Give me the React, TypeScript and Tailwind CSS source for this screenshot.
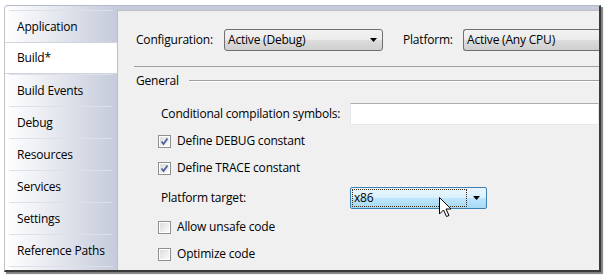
import React from "react";

const font = { fontFamily: '"Open Sans", "Noto Sans", sans-serif' };

const tabs = [
  "Application",
  "Build*",
  "Build Events",
  "Debug",
  "Resources",
  "Services",
  "Settings",
  "Reference Paths",
];

function Arrow() {
  return (
    <svg width="7" height="4" viewBox="0 0 7 4">
      <path d="M0 0H7L3.5 4Z" fill="#000" />
    </svg>
  );
}

function CheckBox({ checked }: { checked: boolean }) {
  return (
    <div className="w-[13px] h-[13px] border border-[#8e8f8f] bg-white p-[1px] shrink-0">
      <div className="w-full h-full bg-[linear-gradient(135deg,#dcdcdc,#fbfbfb)] flex items-center justify-center">
        {checked && (
          <svg width="9" height="9" viewBox="0 0 9 9">
            <path d="M1.5 4.5L3.5 7L7.5 1.5" stroke="#4d61a0" strokeWidth="1.8" fill="none" />
          </svg>
        )}
      </div>
    </div>
  );
}

export default function App() {
  return (
    <div className="w-[604px] h-[276px] bg-white pt-[5px] pl-[4px] text-[12px] tracking-[-0.2px] text-black leading-[16px]" style={font}>
      <div className="w-[597px] h-[267px] flex border-l border-t border-l-[#c3c3c3] border-t-[#b4bacb] border-r-2 border-b-2 border-r-[#3a3a3a] border-b-[#3a3a3a] rounded-tl-[4px] shadow-[2px_2px_1px_rgba(0,0,0,0.5)] bg-[linear-gradient(to_right,#ffffff_0px,#c5cbdb_112px)] pt-[4px] overflow-hidden">
        <div className="w-[112px] shrink-0 flex flex-col">
          {tabs.map((t, i) => {
            const sel = i === 1;
            return (
              <div key={t} className="relative h-[32px] shrink-0">
                {sel ? (
                  <div className="h-full bg-white border-t border-b border-[#d0d4de] flex items-center pl-[12px]">
                    <span className="absolute left-[-2px] top-0 bottom-0 w-[2px] bg-[#3d8ee3]" />
                    {t}
                  </div>
                ) : (
                  <div className="h-full flex flex-col">
                    <div className="mx-[4px] h-[1px] bg-[#dde0e8]" />
                    <div className="flex-1 flex items-center pl-[12px]">{t}</div>
                  </div>
                )}
              </div>
            );
          })}
          <div className="mx-[4px] h-[1px] bg-[#dde0e8]" />
        </div>
        <div className="flex-1 bg-[#f0f0f0] border-l border-t border-[#c0c0c0] flex flex-col">
          <div className="mt-[18px] h-[22px] flex items-center pl-[18px] shrink-0">
            <span className="w-[88px]">Configuration:</span>
            <div className="w-[159px] h-[22px] rounded-[3px] border border-[#707070] bg-[linear-gradient(#f2f2f2,#ebebeb_50%,#dddddd_50%,#cfcfcf)] flex items-center pl-[3px] pr-[5px]">
              <span className="flex-1">Active (Debug)</span>
              <Arrow />
            </div>
            <span className="ml-[20px] w-[60px]">Platform:</span>
            <div className="flex-1 h-[22px] rounded-l-[3px] border border-r-0 border-[#707070] bg-[linear-gradient(#f2f2f2,#ebebeb_50%,#dddddd_50%,#cfcfcf)] flex items-center pl-[3px]">
              Active (Any CPU)
            </div>
          </div>
          <div className="mt-[15px] ml-[16px] h-[1px] bg-[#a0a0a0] shrink-0" />
          <div className="mt-[6px] h-[16px] flex items-center pl-[18px] shrink-0">
            <span>General</span>
            <div className="flex-1 ml-[10px] h-[2px] border-t border-[#a0a0a0] border-b border-b-white" />
          </div>
          <div className="mt-[14px] h-[22px] flex items-center pl-[43px] shrink-0">
            <span className="w-[189px]">Conditional compilation symbols:</span>
            <div className="flex-1 h-[22px] bg-white border border-[#e3e9ef] border-t-[#abadb3]" />
          </div>
          <div className="mt-[8px] h-[16px] flex items-center pl-[40px] gap-[6px] shrink-0">
            <CheckBox checked />
            <span>Define DEBUG constant</span>
          </div>
          <div className="mt-[11px] h-[16px] flex items-center pl-[40px] gap-[6px] shrink-0">
            <CheckBox checked />
            <span>Define TRACE constant</span>
          </div>
          <div className="mt-[11px] h-[22px] flex items-center pl-[43px] shrink-0">
            <span className="w-[189px]">Platform target:</span>
            <div className="relative w-[137px] h-[22px] rounded-[2px] border border-[#3c7fb1] bg-[linear-gradient(#eaf6fd,#d9f0fc_50%,#bee6fd_50%,#a7d9f5)] flex items-center p-[1px]">
              <div className="w-[115px] h-[18px] border border-dotted border-[#3a2a1a] flex items-center pl-[1px]">x86</div>
              <div className="flex-1 flex justify-center">
                <Arrow />
              </div>
              <svg className="absolute left-[88px] top-[9px]" width="13" height="21" viewBox="0 0 13 21">
                <path d="M0.5 0.5V17L4.5 13L7.5 19.5L10 18.5L7 12H12Z" fill="#fff" stroke="#000" strokeWidth="1" strokeLinejoin="miter" />
              </svg>
            </div>
          </div>
          <div className="mt-[10px] h-[16px] flex items-center pl-[40px] gap-[6px] shrink-0">
            <CheckBox checked={false} />
            <span>Allow unsafe code</span>
          </div>
          <div className="mt-[11px] h-[16px] flex items-center pl-[40px] gap-[6px] shrink-0">
            <CheckBox checked={false} />
            <span>Optimize code</span>
          </div>
        </div>
      </div>
    </div>
  );
}
